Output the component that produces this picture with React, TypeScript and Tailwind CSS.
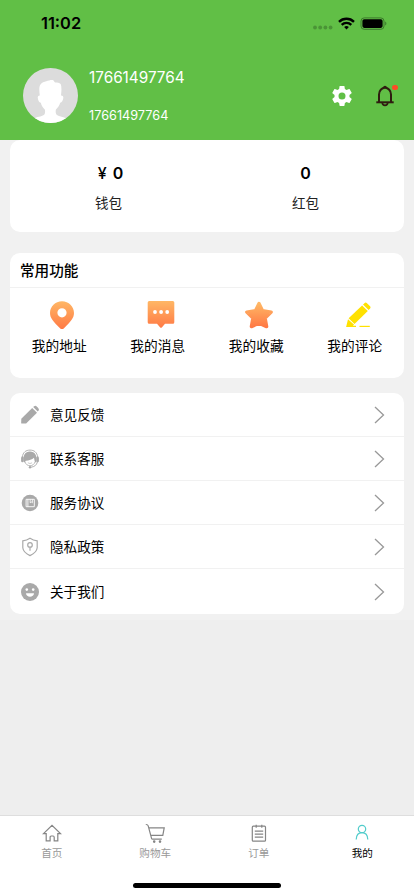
import type { ReactNode } from "react";

const StatusBar = () => {
  return (
    <div className="flex h-[47px] items-center justify-between pl-[41px] pr-[27px]">
      <span className="text-[16.400px] font-semibold leading-none text-black">
        11:02
      </span>
      <div className="flex items-center">
        <svg className="mt-[-1px]" width="20" height="14" viewBox="0 0 20 14" fill="#4a9436">
          <circle cx="2" cy="11.5" r="1.9" />
          <circle cx="7.2" cy="11.5" r="1.9" />
          <circle cx="12.4" cy="11.5" r="1.9" />
          <circle cx="17.6" cy="11.5" r="1.9" />
        </svg>
        <svg
          className="ml-[5px]"
          width="17"
          height="13"
          viewBox="0 0 17 13"
          fill="none"
          stroke="#000"
          strokeWidth="2.4"
        >
          <path d="M1 4.8a10.7 10.7 0 0 1 15 0" />
          <path d="M3.7 7.8a6.9 6.9 0 0 1 9.6 0" />
          <path d="M8.5 12.6l-2.4-2.5a3.4 3.4 0 0 1 4.8 0z" fill="#000" stroke="none" />
        </svg>
        <svg className="ml-[5px]" width="27" height="13" viewBox="0 0 27 13">
          <rect x="1" y="0.9" width="23" height="11.4" rx="3.2" fill="none" stroke="#3d7a2d" />
          <rect x="2.4" y="2.3" width="20.2" height="8.600" rx="1.8" fill="#000" />
          <path d="M25.2 4.6v4c1.6-.8 1.6-3.2 0-4z" fill="#3d7a2d" />
        </svg>
      </div>
    </div>
  );
};

const Avatar = () => {
  return (
    <svg width="55" height="55" viewBox="0 0 55 55">
      <clipPath id="avatar">
        <circle cx="27.5" cy="27.5" r="27.5" />
      </clipPath>
      <g clipPath="url(#avatar)">
        <rect width="55" height="55" fill="#dcdcdc" />
        <path
          fill="#fff"
          d="M16.8 27.5c-.5-4-1-8.500.5-10.700 1.500-2.500 4-2.800 6-3.500 2.200-.8 4.200-1.500 6.700-1.300.8.6 1.200 1.800 2 2.400 2.200.2 4.600 0 5.600 1.600 1.300 2.500.8 8 .4 11.500 1.500-.2 2.600 1 2.300 2.500-.4 2.300-1.400 4.500-3.100 4.800-.8 2.800-2.300 5-4.300 6.700-.5 2.300-.2 4.500 1 5.500 2.300 1.700 7 1.700 9.500 3.500V56H11v-5.500c2.500-1.800 7.500-1.800 9.800-3.500 1.300-1 1.600-3.200 1-5.500-2-1.700-3.300-3.900-4-6.700-1.700-.3-2.700-2.500-3-4.800-.3-1.500.8-2.700 2-2.500z"
        />
      </g>
    </svg>
  );
};

const GearIcon = () => {
  return (
    <svg width="24" height="24" viewBox="0 0 24 24" fill="#fff">
      <path d="M19.430 12.980c.04-.32.070-.64.070-.98s-.03-.66-.07-.98l2.110-1.650c.19-.15.24-.42.12-.64l-2-3.460c-.12-.22-.39-.3-.61-.22l-2.490 1c-.52-.4-1.080-.73-1.690-.98l-.38-2.650C14.460 2.180 14.250 2 14 2h-4c-.25 0-.46.18-.49.42l-.38 2.650c-.61.25-1.170.59-1.690.98l-2.490-1c-.23-.09-.49 0-.61.22l-2 3.460c-.13.22-.07.49.12.64l2.110 1.650c-.04.32-.07.65-.07.98s.03.66.07.98l-2.110 1.650c-.19.15-.24.42-.12.64l2 3.460c.12.22.39.3.61.22l2.490-1c.52.4 1.080.73 1.690.98l.38 2.650c.03.24.24.42.49.42h4c.25 0 .46-.18.49-.42l.38-2.650c.61-.25 1.170-.59 1.690-.98l2.490 1c.23.09.49 0 .61-.22l2-3.460c.12-.22.070-.49-.12-.64zM12 15.500a3.500 3.500 0 1 1 0-7 3.500 3.500 0 0 1 0 7z" />
    </svg>
  );
};

const BellIcon = () => {
  return (
    <svg width="24" height="24" viewBox="0 0 24 24" fill="none" stroke="#2f1c10" strokeWidth="2">
      <path d="M6 18V10.500a6 6.700 0 0 1 12 0V18" />
      <path d="M3.300 18.300h17.400" />
      <path d="M9.300 18.800c.2 3.400 5.200 3.400 5.400 0" strokeWidth="1.700" />
      <path d="M10 4c0-3 4-3 4 0z" fill="#2f1c10" stroke="none" />
    </svg>
  );
};

const OrangeFill = ({ id }: { id: string }) => (
  <linearGradient id={id} x1="0" y1="0" x2="0" y2="1">
    <stop offset="0" stopColor="#ffb765" />
    <stop offset="1" stopColor="#ff7a45" />
  </linearGradient>
);

const actions: { name: string; icon: ReactNode }[] = [
  {
    name: "我的地址",
    icon: (
      <>
        <OrangeFill id="pin" />
        <path
          fill="url(#pin)"
          fillRule="evenodd"
          d="M18 1.200c6.800 0 12 5.200 12 11.700 0 5.200-3.400 8.600-9.800 15a3 3 0 0 1-4.400 0C9.400 21.500 6 18.100 6 12.900 6 6.400 11.200 1.200 18 1.200zm0 7a4.600 4.600 0 1 0 0 9.200 4.600 4.600 0 0 0 0-9.200z"
        />
      </>
    ),
  },
  {
    name: "我的消息",
    icon: (
      <>
        <OrangeFill id="message" />
        <path
          fill="url(#message)"
          d="M6.200 1h23.600q1.500 0 1.500 1.500v19.800q0 1.500-1.500 1.500H22l-3.200 3.600q-.8.800-1.600 0L14 23.800H6.200q-1.500 0-1.500-1.500V2.500Q4.700 1 6.200 1z"
        />
        <circle cx="12" cy="12" r="1.900" fill="#fff" />
        <circle cx="18.100" cy="12" r="1.900" fill="#fff" />
        <circle cx="24.200" cy="12" r="1.900" fill="#fff" />
      </>
    ),
  },
  {
    name: "我的收藏",
    icon: (
      <>
        <OrangeFill id="star" />
        <path
          fill="url(#star)"
          stroke="url(#star)"
          strokeWidth="3.400"
          strokeLinejoin="round"
          d="M18 3.500l3.500 7.200 8.700 1.400-6.100 5.900 1.500 8.600-7.600-3.300-7.600 3.300 1.500-8.600-6.100-5.900 8.700-1.400z"
        />
      </>
    ),
  },
  {
    name: "我的评论",
    icon: (
      <g fill="#ffe100">
        <path d="M24.200 3.400l-1.200 1.100 5.600 5.500 1.500-1.500q1-1.200 0-2.300l-3.400-3.300q-1.200-.8-2.500.5z" />
        <path d="M22.100 5.400L8.600 18.200l5.900 5.800L27.800 11z" />
        <path d="M8 19.200L6.100 27h9.900v-1.200h-3.300l1.400-1z" />
        <path d="M19.500 25.800h10.300V27H19.500z" />
      </g>
    ),
  },
];

const rows: { name: string; icon: ReactNode }[] = [
  {
    name: "意见反馈",
    icon: (
      <g fill="#a9a9a9">
        <path d="M1.300 13.800L12.200 3l4.800 4.800L6.100 18.600H1.800q-.6 0-.6-.6z" />
        <path d="M13.200 2.100l.9-.9q1-.9 2-.2 1.600 1 2.600 2.700.6 1-.2 2l-.8.900z" />
      </g>
    ),
  },
  {
    name: "联系客服",
    icon: (
      <g fill="none" stroke="#a9a9a9">
        <path d="M2.300 8C3 3.300 5.800 1.100 10 1.100S17 3.300 17.700 8" strokeWidth=".9" />
        <path
          d="M4 13C2.400 6.500 5.300 2.600 10 2.600S17.600 6.500 16 13l-1 .6c-.5-1.500-.6-3-1-4.800-1.900 1.900-5 2.700-8.200 2.900-.6.100-.4 1-.8 1.900z"
          fill="#a9a9a9"
          stroke="none"
        />
        <path d="M5 13c.8 2.400 2.600 3.700 5 3.700s4.200-1.300 5-3.700" strokeWidth=".8" />
        <rect x="1.100" y="7.600" width="2.700" height="5.600" rx="1.300" fill="#a9a9a9" stroke="none" />
        <rect x="16.200" y="7.600" width="2.700" height="5.600" rx="1.300" fill="#a9a9a9" stroke="none" />
        <path d="M17.400 13c-.8 3-2.900 4.900-6.600 5.200" strokeWidth=".9" />
        <path d="M7.900 13.800q2.100 1.500 4.200 0" strokeWidth=".6" />
        <circle cx="10" cy="18.200" r="1.200" fill="#a9a9a9" stroke="none" />
      </g>
    ),
  },
  {
    name: "服务协议",
    icon: (
      <>
        <circle cx="10" cy="10" r="8.300" fill="#a9a9a9" />
        <g fill="none" stroke="#fff" strokeWidth=".9">
          <path d="M6.100 6.300h8.200v7.400H6.100zM7.900 6.300v7.400" />
          <path d="M10.200 6.300v3.500l1.100-.8 1.100.8V6.300" strokeWidth=".8" />
        </g>
      </>
    ),
  },
  {
    name: "隐私政策",
    icon: (
      <g fill="none" stroke="#a9a9a9" strokeWidth="1.200">
        <path d="M10 1.300q3.200 2.200 7.200 2.500v7q-.4 4.600-7.200 7.800-6.800-3.200-7.200-7.800v-7q4-.3 7.200-2.500z" />
        <circle cx="10" cy="7.900" r="2.300" />
        <path d="M10 10.200v3.500" />
      </g>
    ),
  },
  {
    name: "关于我们",
    icon: (
      <>
        <circle cx="10" cy="10" r="9" fill="#a9a9a9" />
        <circle cx="6.800" cy="7.600" r="1.300" fill="#fff" />
        <circle cx="13.200" cy="7.600" r="1.300" fill="#fff" />
        <path d="M6 11.300h8c0 4.500-8 4.500-8 0z" fill="#fff" />
      </>
    ),
  },
];

const tabs: { name: string; icon: ReactNode; active?: boolean }[] = [
  {
    name: "首页",
    icon: (
      <path d="M1.500 10.600L10 2.400l8.500 8.200h-2.700v7.200h-3.600v-3.400q0-1.400-1.100-1.400H9.300q-1.200 0-1.200 1.400v3.400H4.200v-7.200z" />
    ),
  },
  {
    name: "购物车",
    icon: (
      <>
        <path d="M.8 1.500q2-.1 2.400 1.300L6.600 15.600q.2.500.8.500h9.400M4 4.900h15.200l-1.400 7.400H6" />
        <circle cx="9.200" cy="18.600" r=".7" fill="currentColor" />
        <circle cx="15" cy="18.600" r=".7" fill="currentColor" />
      </>
    ),
  },
  {
    name: "订单",
    icon: (
      <>
        <rect x="3.300" y="3.200" width="13.200" height="15" rx="1" />
        <path d="M7.200 1.700v3M12.800 1.700v3M5.800 8.200h8.400M5.800 11.200h8.400M5.800 14.200h8.400" />
      </>
    ),
  },
  {
    name: "我的",
    active: true,
    icon: (
      <>
        <circle cx="10" cy="6" r="3.700" />
        <path d="M4.200 16.500c.2-4.500 2.700-6.800 5.800-6.800s5.600 2.300 5.800 6.800" />
      </>
    ),
  },
];

const App = () => {
  return (
    <div className="flex h-[896px] w-[414px] flex-col overflow-hidden bg-[#eeeeee] font-['Inter','Noto_Sans_CJK_SC',sans-serif] text-black">
      <header className="h-[139.500px] shrink-0 bg-[#61bf46]">
        <StatusBar />
        <div className="flex pl-[22.500px] pt-[21px]">
          <Avatar />
          <div className="ml-[11.500px] flex flex-col gap-[25px] pt-[2px] leading-none text-white">
            <span className="text-[15.300px]">17661497764</span>
            <span className="text-[12.700px]">17661497764</span>
          </div>
          <div className="ml-auto flex gap-[19px] pr-[17px] pt-[15.500px]">
            <GearIcon />
            <div className="relative">
              <BellIcon />
              <span className="absolute right-[-0.500px] top-px size-[5.500px] rounded-full bg-[#ff4a26]" />
            </div>
          </div>
        </div>
      </header>

      <main className="flex h-[480.500px] shrink-0 flex-col bg-[#f1f1f1] px-[10px]">
        <section className="grid h-[92px] grid-cols-2 rounded-[10px] bg-white pt-[24px] text-center">
          <div>
            <div className="pl-[4px] text-[16px] font-semibold leading-[18px]">
              <span className="font-medium">¥</span>
              <span className="ml-[6px]">0</span>
            </div>
            <div className="mt-[11px] text-[13.500px] leading-[20px] text-[#222]">钱包</div>
          </div>
          <div>
            <div className="text-[16px] font-semibold leading-[18px]">0</div>
            <div className="mt-[11px] text-[13.500px] leading-[20px] text-[#222]">红包</div>
          </div>
        </section>

        <section className="mt-[21.500px] h-[125px] rounded-[10px] bg-white">
          <h1 className="h-[35px] border-b border-[#f1f1f1] pl-[10px] pt-px text-[14.600px] font-medium leading-[35px]">
            常用功能
          </h1>
          <div className="grid grid-cols-4 pt-[12px]">
            {actions.map((action) => (
              <div key={action.name} className="flex flex-col items-center">
                <svg className="ml-[6px]" width="36" height="30" viewBox="0 0 36 30">
                  {action.icon}
                </svg>
                <span className="mt-[6px] text-[13.700px] leading-[20px]">{action.name}</span>
              </div>
            ))}
          </div>
        </section>

        <section className="mt-[14.500px] overflow-hidden rounded-[10px] bg-white pt-[0.600px]">
          {rows.map((row) => (
            <div
              key={row.name}
              className="flex h-[44.100px] items-center border-b border-[#f1f1f1] pl-[10px] pr-[18px] pt-px last:border-b-0 last:pt-0"
            >
              <svg width="20" height="20" viewBox="0 0 20 20">
                {row.icon}
              </svg>
              <span className="ml-[10px] text-[13.600px] leading-[20px]">{row.name}</span>
              <svg
                className="ml-auto"
                width="14"
                height="18"
                viewBox="0 0 14 18"
                fill="none"
                stroke="#999"
                strokeWidth="1.300"
              >
                <path d="M3 1l8.500 8L3 17" />
              </svg>
            </div>
          ))}
        </section>
      </main>

      <nav className="mt-auto flex h-[81px] shrink-0 flex-col border-t border-[#dedede] bg-white">
        <div className="grid grid-cols-4 pt-[7px]">
          {tabs.map((tab) => (
            <div
              key={tab.name}
              className={
                tab.active
                  ? "flex flex-col items-center text-black"
                  : "flex flex-col items-center text-[#999]"
              }
            >
              <svg
                className={tab.active ? "text-[#52cccb]" : "text-[#858585]"}
                width="20"
                height="20"
                viewBox="0 0 20 20"
                fill="none"
                stroke="currentColor"
                strokeWidth="1.200"
              >
                {tab.icon}
              </svg>
              <span className="mt-[3px] text-[10.600px] leading-[15px]">{tab.name}</span>
            </div>
          ))}
        </div>
        <div className="mx-auto mb-[8px] mt-auto h-[5px] w-[148px] rounded-full bg-black" />
      </nav>
    </div>
  );
};

export default App;
